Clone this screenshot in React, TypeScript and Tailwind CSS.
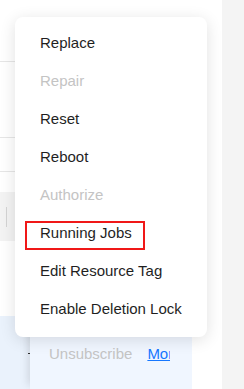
import React from "react";

const items = [
  { label: "Replace" },
  { label: "Repair", disabled: true },
  { label: "Reset" },
  { label: "Reboot" },
  { label: "Authorize", disabled: true },
  { label: "Running Jobs", marked: true },
  { label: "Edit Resource Tag" },
  { label: "Enable Deletion Lock" },
];

export default function App() {
  return (
    <div
      className="relative w-[244px] h-[389px] overflow-hidden flex bg-white"
      style={{ fontFamily: '"Liberation Sans", Arial, sans-serif' }}
    >
      {/* table behind the menu */}
      <div className="w-[192px] flex flex-col">
        <div className="h-[62px] border-b border-[#e6e6e6]" />
        <div className="h-[76px] border-b border-[#e6e6e6]" />
        <div className="h-[34px] border-b border-[#e6e6e6]" />
        <div className="h-[20px]" />
        <div className="h-[49px] bg-[#f3f3f3] flex items-center pl-[6px]">
          <div className="w-px h-[20px] bg-[#d4d4d4]" />
        </div>
        <div className="h-[75px]" />
        <div className="flex-1 flex bg-[#eaf2fc]">
          <div className="w-[30px] flex justify-end pt-[28px]">
            <span className="block w-[2px] h-px mt-[9px] bg-[#333]" />
          </div>
          <div className="flex-1 bg-[#f0f6ff] shadow-[-6px_0_8px_-4px_rgba(0,0,0,0.12)] pt-[28px] pl-[19px] flex gap-[15px] text-[15px] leading-[20px] h-full">
            <span className="text-[#c4c4c4]">Unsubscribe</span>
            <span className="w-[23px] overflow-hidden whitespace-nowrap text-[#1677ff] underline">
              More
            </span>
          </div>
        </div>
      </div>
      <div className="w-[30px] bg-white" />
      <div className="flex-1 bg-[#f4f4f4]" />

      {/* dropdown menu */}
      <div className="absolute left-[15px] top-[17px] w-[192px] h-[320px] rounded-[8px] bg-white shadow-[0_3px_16px_rgba(0,0,0,0.12)] pt-[7px] pb-[9px]">
        {items.map((it) => (
          <div
            key={it.label}
            className={
              "h-[38px] leading-[38px] pl-[25px] text-[15px] whitespace-nowrap " +
              (it.disabled ? "text-[#c4c4c4]" : "text-[#1f1f1f]")
            }
          >
            {it.label}
          </div>
        ))}
        <div className="absolute left-[10px] top-[204px] w-[120px] h-[29px] border-2 border-[#f01818]" />
      </div>
    </div>
  );
}
